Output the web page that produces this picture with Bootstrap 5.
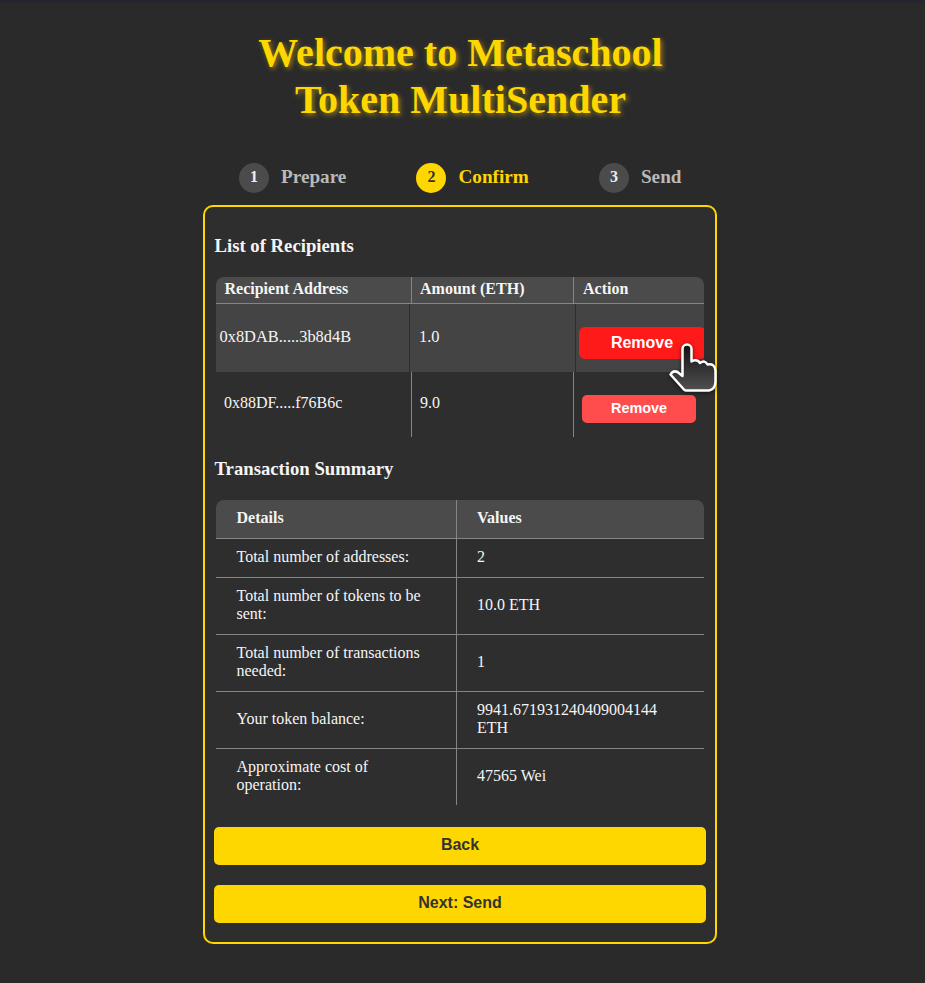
<!DOCTYPE html>
<html lang="en">
<head>
<meta charset="utf-8">
<meta name="viewport" content="width=device-width, initial-scale=1">
<title>Token MultiSender</title>
<link rel="stylesheet" href="https://cdn.jsdelivr.net/npm/bootstrap@5.3.0/dist/css/bootstrap.min.css">
<style>
  body { background: #2a2a2a; color: #f5f5f5; font-family: "Liberation Serif", "Times New Roman", serif; font-size: 16px; line-height: 18px; border-top: 3px solid #25252d; height: 983px; padding-right: 5px; overflow: hidden; }
  .app { width: 514px; }
  .app-title { margin: 26px 0 0; padding-left: 1px; font-size: 40px; line-height: 47px; font-weight: 700; color: #ffd700; text-shadow: 2px 2px 5px rgba(255, 215, 0, .5); }
  .steps { margin-top: 40px; height: 30px; padding: 0 35.5px 0 36px; }
  .step { gap: 12px; font-size: 19.2px; font-weight: 700; color: #b9b9b9; }
  .step > span:last-child { padding-bottom: 2px; }
  .step-no { width: 30px; height: 30px; font-size: 16px; background: #4b4b4b; color: #eee; padding-bottom: 2px; }
  .step.current { color: #ffd700; }
  .step.current .step-no { background: #ffd700; color: #333; }
  .panel { margin-top: 12px; height: 739px; border: 2px solid #ffd700; border-radius: 10px; background: #2e2e2e; padding: 0 9px; position: relative; }
  .panel h2 { font-size: 18.72px; line-height: 22px; font-weight: 700; margin: 0 0 0 .5px; }
  .panel .h-list { padding-top: 28px; }
  .grid-table { width: 488px; margin-left: 2px; border-radius: 8px; overflow: hidden; }
  .grid-table > div { display: grid; }
  .recipients { margin-top: 20px; height: 160px; }
  .recipients > div { grid-template-columns: 196px 162px 1fr; }
  .grid-table > div > div { display: flex; align-items: center; border-right: 1px solid #858585; }
  .grid-table > div > div:last-child { border-right: 0; }
  .head { background: #4b4b4b; font-weight: 700; border-bottom: 1px solid #858585; }
  .recipients .head { height: 27px; }
  .recipients .head > div { padding: 0 8px 2px 8.5px; }
  .recipients .head > div:nth-child(2) { padding-left: 8px; }
  .recipients .head > div:last-child { padding-left: 9px; }
  .recipients .hovered { height: 68px; background: #444; grid-template-columns: 194px 166px 1fr; }
  .recipients .hovered > div { border-right-color: #2e2e2e; padding: 0 3px 2px 3.5px; font-size: 16.4px; }
  .recipients .hovered > div:nth-child(2) { padding-left: 9px; }
  .recipients .hovered > div:nth-child(3) { padding: 10px 0 0 3px; }
  .recipients .plain { height: 65px; }
  .recipients .plain > div { padding: 0 8px 3px 8px; }
  .recipients .plain > div:last-child { padding-top: 9px; padding-bottom: 0; }
  .btn-remove { font: 700 14.4px/18px "Liberation Sans", Arial, sans-serif; width: 114px; height: 28px; padding: 0 0 2px; border: 0; border-radius: 5px; background: #ff4d4d; color: #fff; }
  .hovered .btn-remove { flex: none; width: 127px; height: 32px; font-size: 16px; padding-bottom: 0; background: #ff1a1a; border-radius: 6px; margin-left: -.5px; }
  .panel .h-sum { padding-top: 21px; }
  .summary { margin-top: 20px; }
  .summary > div { grid-template-columns: 241px 1fr; border-bottom: 1px solid #858585; height: 57px; }
  .summary > .short { height: 39px; }
  .summary > div:last-child { border-bottom: 0; height: 56px; }
  .summary > div > div { padding: 0 20px 2px 20.5px; }
  .summary > div > div:last-child { padding-left: 20px; }
  .btn-main { font: 700 16px/20px "Liberation Sans", Arial, sans-serif; width: 492px; height: 38px; border: 0; border-radius: 5px; background: #ffd700; color: #333; padding: 0 0 3px; margin-top: 20px; }
  .summary + .btn-main { margin-top: 22px; }
  .btn-main:hover { background: #ffd700; color: #333; }
  .pointer { position: absolute; left: 460px; top: 134px; filter: drop-shadow(0 1px 2px rgba(0, 0, 0, .6)); }
</style>
</head>
<body>
<main class="app mx-auto">
  <h1 class="app-title text-center">Welcome to Metaschool<br>Token MultiSender</h1>
  <div class="steps d-flex justify-content-between">
    <div class="step d-flex align-items-center"><span class="step-no rounded-circle d-flex align-items-center justify-content-center">1</span><span>Prepare</span></div>
    <div class="step current d-flex align-items-center"><span class="step-no rounded-circle d-flex align-items-center justify-content-center">2</span><span>Confirm</span></div>
    <div class="step d-flex align-items-center"><span class="step-no rounded-circle d-flex align-items-center justify-content-center">3</span><span>Send</span></div>
  </div>
  <section class="panel">
    <h2 class="h-list">List of Recipients</h2>
    <div class="grid-table recipients">
      <div class="head"><div>Recipient Address</div><div>Amount (ETH)</div><div>Action</div></div>
      <div class="hovered"><div>0x8DAB.....3b8d4B</div><div>1.0</div><div><button class="btn btn-remove" type="button">Remove</button></div></div>
      <div class="plain"><div>0x88DF.....f76B6c</div><div>9.0</div><div><button class="btn btn-remove" type="button">Remove</button></div></div>
    </div>
    <h2 class="h-sum">Transaction Summary</h2>
    <div class="grid-table summary">
      <div class="head short"><div>Details</div><div>Values</div></div>
      <div class="short"><div>Total number of addresses:</div><div>2</div></div>
      <div><div>Total number of tokens to be sent:</div><div>10.0 ETH</div></div>
      <div><div>Total number of transactions needed:</div><div>1</div></div>
      <div><div>Your token balance:</div><div>9941.671931240409004144 ETH</div></div>
      <div><div>Approximate cost of<br>operation:</div><div>47565 Wei</div></div>
    </div>
    <button class="btn btn-main d-block" type="button">Back</button>
    <button class="btn btn-main d-block" type="button">Next: Send</button>
    <svg class="pointer" width="56" height="54" viewBox="0 0 56 54" aria-hidden="true">
      <defs><linearGradient id="hand" x1="0" y1="0" x2="0" y2="1"><stop offset="0" stop-color="#111"/><stop offset="1" stop-color="#505050"/></linearGradient></defs>
      <path d="M17.500 35V8a4.500 4.500 0 0 1 9 0V20.500Q32 17.500 35 22Q40 18.500 42.500 23.500Q50 22 50.500 30V41Q50 48.500 44 49.500H21Q19.500 49.500 18.500 48L5.500 33.500Q8 29 12.500 31Z" fill="url(#hand)" stroke="#fff" stroke-width="2.500" stroke-linejoin="round"/>
    </svg>
  </section>
</main>
<script src="https://cdn.jsdelivr.net/npm/bootstrap@5.3.0/dist/js/bootstrap.bundle.min.js"></script>
</body>
</html>
